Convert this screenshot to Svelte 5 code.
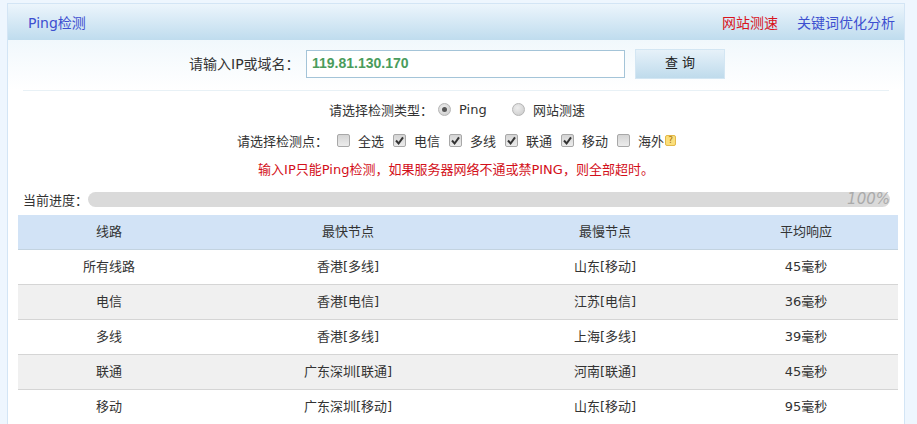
<script>
  const points = [
    { label: "全选", on: false },
    { label: "电信", on: true },
    { label: "多线", on: true },
    { label: "联通", on: true },
    { label: "移动", on: true },
    { label: "海外", on: false },
  ];

  const rows = [
    ["所有线路", "香港[多线]", "山东[移动]", "45毫秒"],
    ["电信", "香港[电信]", "江苏[电信]", "36毫秒"],
    ["多线", "香港[多线]", "上海[多线]", "39毫秒"],
    ["联通", "广东深圳[联通]", "河南[联通]", "45毫秒"],
    ["移动", "广东深圳[移动]", "山东[移动]", "95毫秒"],
  ];
</script>

<div class="panel">
  <div class="head">
    <span class="title">Ping检测</span>
    <div class="links">
      <span class="hot">网站测速</span>
      <span class="title">关键词优化分析</span>
    </div>
  </div>

  <div class="search">
    <span class="search-label">请输入IP或域名：</span>
    <div class="ip">119.81.130.170</div>
    <div class="btn">查 询</div>
  </div>

  <div class="options">
    <div class="line types">
      <span class="opt-label">请选择检测类型：</span>
      <span class="radio on"></span>
      <span class="ping">Ping</span>
      <span class="radio"></span>
      <span class="speed">网站测速</span>
    </div>

    <div class="line nodes">
      <span class="opt-label">请选择检测点：</span>
      {#each points as p}
        <span class="box">
          {#if p.on}
            <svg width="11" height="11" viewBox="0 0 11 11">
              <path d="M2 5.5l2.6 3L9 2.4" fill="none" stroke="#333" stroke-width="2" />
            </svg>
          {/if}
        </span>
        <span class="node-name">{p.label}</span>
      {/each}
      <span class="help">?</span>
    </div>

    <div class="warn">输入IP只能Ping检测，如果服务器网络不通或禁PING，则全部超时。</div>
  </div>

  <div class="progress">
    <span class="progress-label">当前进度：</span>
    <div class="bar"><em>100%</em></div>
  </div>

  <table>
    <colgroup>
      <col class="c1" />
      <col class="c2" />
      <col class="c3" />
      <col class="c4" />
    </colgroup>
    <thead>
      <tr>
        <th>线路</th>
        <th>最快节点</th>
        <th>最慢节点</th>
        <th>平均响应</th>
      </tr>
    </thead>
    <tbody>
      {#each rows as r}
        <tr>
          <td>{r[0]}</td>
          <td>{r[1]}</td>
          <td>{r[2]}</td>
          <td>{r[3]}</td>
        </tr>
      {/each}
    </tbody>
  </table>
</div>

<style>
  :global(body) {
    background: #eef6fe;
    overflow: hidden;
  }

  .panel {
    width: 898px;
    height: 421px;
    margin: 3px 0 0 7px;
    box-sizing: border-box;
    border: 1px solid #d3e5f5;
    border-bottom: 0;
    background: #fff;
    font-family: "DejaVu Sans", "Noto Sans CJK SC", sans-serif;
    font-size: 13px;
    color: #333;
    overflow: hidden;
  }

  .head {
    height: 36px;
    display: flex;
    justify-content: space-between;
    align-items: center;
    padding: 0 9px 0 20px;
    background: linear-gradient(#ecf5fc, #bfdcee);
    font-size: 14px;
  }

  .links {
    display: flex;
    gap: 19px;
  }

  .title {
    color: #3d4fd0;
  }

  .hot {
    color: #d9141e;
  }

  .search {
    height: 50px;
    display: flex;
    align-items: flex-start;
    padding: 10px 0 0 181px;
    box-sizing: border-box;
    background: linear-gradient(#f1f8fc, #fff);
  }

  .search-label {
    font-size: 14px;
    line-height: 28px;
    width: 117px;
    white-space: nowrap;
  }

  .ip {
    width: 319px;
    height: 28px;
    box-sizing: border-box;
    border: 1px solid #a4c4d8;
    background: #fff;
    padding-left: 5px;
    line-height: 25px;
    font-family: "Liberation Sans", sans-serif;
    font-weight: bold;
    font-size: 14px;
    color: #4a9c5c;
  }

  .btn {
    width: 90px;
    height: 30px;
    margin: -1px 0 0 10px;
    box-sizing: border-box;
    border: 1px solid #d3e6f3;
    background: linear-gradient(#e6f1f9, #bfdbec);
    text-align: center;
    line-height: 26px;
    color: #222;
  }

  .options {
    margin: 0 15px;
    border-top: 1px solid #e8f1f6;
    text-align: center;
  }

  .line {
    display: flex;
    align-items: center;
    height: 22px;
  }

  .types {
    height: 38px;
    box-sizing: border-box;
    padding: 0 0 2px 306px;
  }

  .opt-label {
    white-space: nowrap;
    text-align: left;
  }

  .types .opt-label {
    width: 109px;
  }

  .ping {
    width: 40px;
    margin: 0 13px 0 8px;
    text-align: left;
  }

  .speed {
    margin-left: 8px;
  }

  .radio {
    width: 11px;
    height: 11px;
    border-radius: 50%;
    border: 1px solid #b5b5b5;
    background: radial-gradient(circle at 40% 35%, #eee, #c8c8c8);
    display: flex;
    align-items: center;
    justify-content: center;
    flex: none;
  }

  .radio.on::after {
    content: "";
    width: 5px;
    height: 5px;
    border-radius: 50%;
    background: #555;
  }

  .nodes {
    padding-left: 214px;
  }

  .nodes .opt-label {
    width: 100px;
  }

  .box {
    width: 11px;
    height: 11px;
    margin-top: 1px;
    border: 1px solid #a8a8a8;
    border-radius: 2px;
    background: linear-gradient(#d4d4d4, #ececec);
    display: flex;
    align-items: center;
    justify-content: center;
    flex: none;
  }

  .node-name {
    margin: 0 9px 0 8px;
    white-space: nowrap;
  }

  .node-name:nth-last-child(2) {
    margin-right: 1px;
  }

  .help {
    width: 11px;
    height: 11px;
    margin-top: 1px;
    box-sizing: border-box;
    border: 1px solid #e3b94a;
    border-radius: 2px;
    background: #fbdf7c;
    color: #a8720c;
    font-size: 9px;
    line-height: 9px;
    text-align: center;
    flex: none;
  }

  .warn {
    margin-top: 9px;
    font-size: 13px;
    line-height: 20px;
    color: #d3101a;
  }

  .progress {
    display: flex;
    align-items: center;
    margin: 11px 15px 0 15px;
    height: 16px;
  }

  .progress-label {
    width: 65px;
    white-space: nowrap;
    flex: none;
  }

  .bar {
    width: 802px;
    height: 15px;
    border-radius: 8px;
    background: #dadada;
    display: flex;
    justify-content: flex-end;
    align-items: center;
    flex: none;
  }

  .bar em {
    color: #aaa;
    font-size: 15px;
    font-family: "DejaVu Sans", sans-serif;
  }

  table {
    width: 880px;
    margin: 8px 0 0 10px;
    border-collapse: collapse;
    table-layout: fixed;
  }

  .c1 { width: 182px; }
  .c2 { width: 296px; }
  .c3 { width: 218px; }
  .c4 { width: 184px; }

  th, td {
    height: 34px;
    box-sizing: content-box;
    padding: 0 0 0 0;
    text-align: center;
    vertical-align: top;
    line-height: 33px;
    font-weight: normal;
    font-size: 13px;
    border-bottom: 1px solid #d5d5d5;
  }

  th {
    background: #d2e3f6;
    border-bottom-color: #c3d3e0;
  }

  tbody tr:nth-child(even) td {
    background: #f0f0f0;
  }
</style>
